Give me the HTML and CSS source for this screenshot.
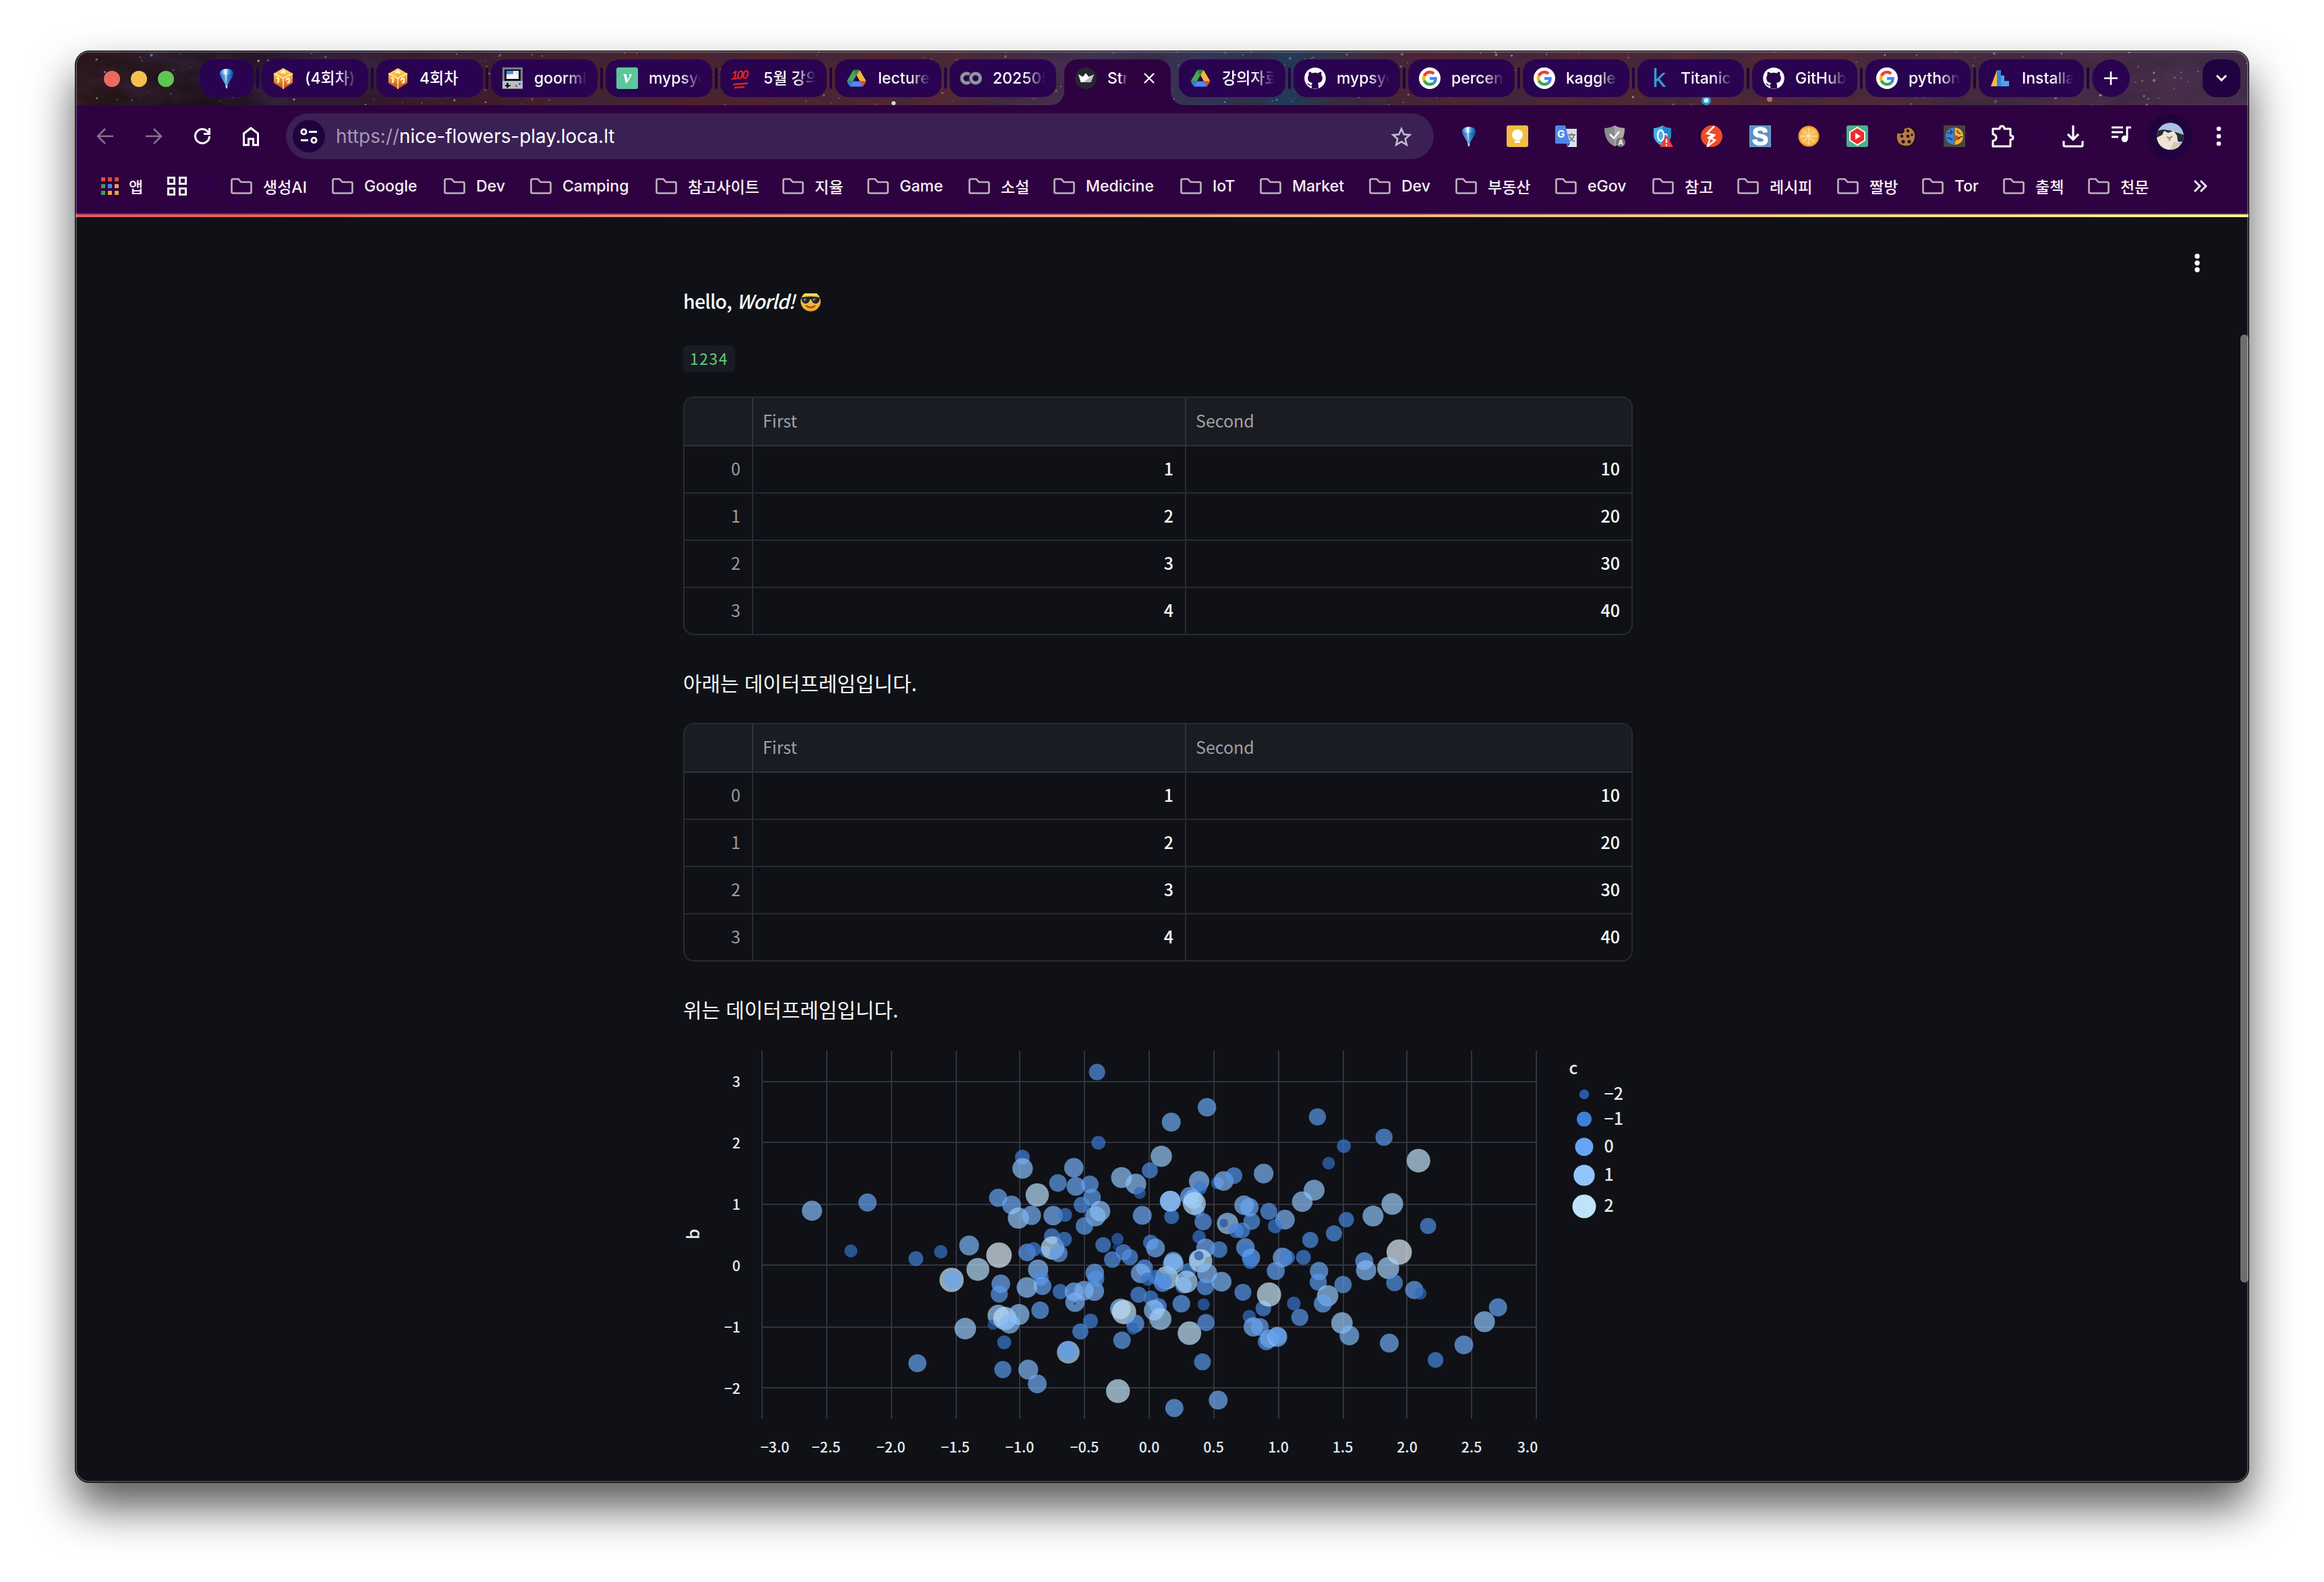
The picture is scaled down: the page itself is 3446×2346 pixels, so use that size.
FILE: index.html
```html
<!DOCTYPE html>
<html lang="ko">
<head>
<meta charset="utf-8">
<title>Streamlit</title>
<link rel="stylesheet" href="styles.css">
</head>
<body>
<svg class="defs" width="0" height="0" aria-hidden="true">
  <defs>
    <linearGradient id="gemFill" x1="0" x2="1"><stop offset="0" stop-color="#1c6fd0"/><stop offset=".45" stop-color="#d8f1ff"/><stop offset=".6" stop-color="#4aa8ee"/><stop offset="1" stop-color="#0b3f96"/></linearGradient>
    <linearGradient id="diceFill" x1="0" y1="0" x2="0" y2="1"><stop offset="0" stop-color="#ffe27a"/><stop offset=".45" stop-color="#f7a63a"/><stop offset="1" stop-color="#b8401c"/></linearGradient>
    <linearGradient id="faceFill" x1="0" y1="0" x2="0" y2="1"><stop offset="0" stop-color="#ffe34f"/><stop offset="1" stop-color="#ee9a2c"/></linearGradient>
    <symbol id="gem" viewBox="0 0 32 32"><path d="M6 7Q9 2 16 2t10 5q1 3-1 6L18 25l-1 6h-2l-1-6L7 13Q5 10 6 7z" fill="url(#gemFill)"/><path d="M6 9q10 4 20 0l-2 5-7 13h-2L8 14z" fill="#0c56b0" opacity=".45"/><path d="M12 4l4 20V3z" fill="#fff" opacity=".6"/></symbol>
    <symbol id="dice" viewBox="0 0 32 32"><path d="M16 1l14 8v14l-14 9-14-9V9z" fill="url(#diceFill)"/><path d="M2 9l14 7 14-7M16 16v16" fill="none" stroke="#fff0a0" stroke-width="1.6"/><path d="M6 16q4-1 3 3t-1 4M20 19q4-5 5-1t-3 5M13 8q5-4 5 1" fill="none" stroke="#fffbd5" stroke-width="2.4"/></symbol>
    <symbol id="console" viewBox="0 0 32 32"><path d="M1 0h30v32H1z" fill="#77808a"/><path d="M1 20h30v11H1z" fill="#b9bec4"/><path d="M4 3h24v17H4z" fill="#10141c"/><path d="M7 5h18v12H7z" fill="#dbe9fb"/><path d="M7 5h10v5H7z" fill="#4c8cf0"/><path d="M7 13h5v-3h5V7h4v4h4v6H7z" fill="#fff"/><path d="M7 23h3v3h3v2h-3v2H7v-2H5v-2h2z" fill="#111"/><path d="M20 26h3v3h-3z" fill="#e04a4a"/><path d="M25 23h3v3h-3z" fill="#3867d6"/></symbol>
    <symbol id="drive" viewBox="0 0 87.3 78"><path d="M6.6 66.85l3.85 6.65c.8 1.4 1.95 2.5 3.3 3.3l13.75-23.8H0c0 1.55.4 3.1 1.2 4.5z" fill="#3c78e8"/><path d="M43.65 25L29.9 1.2c-1.35.8-2.5 1.9-3.3 3.3L1.2 48.5A9 9 0 0 0 0 53h27.5z" fill="#47a852"/><path d="M73.55 76.8c1.35-.8 2.5-1.9 3.3-3.3l1.6-2.75L86.1 57.5c.8-1.4 1.2-2.95 1.2-4.5H59.8l5.85 11.5z" fill="#dc4a3c"/><path d="M43.65 25L57.4 1.2C56.05.4 54.5 0 52.9 0H34.4c-1.6 0-3.15.45-4.5 1.2z" fill="#2f8a40"/><path d="M59.8 53H27.5L13.75 76.8c1.35.8 2.9 1.2 4.5 1.2h50.8c1.6 0 3.15-.45 4.5-1.2z" fill="#4d8bf5"/><path d="M73.4 26.5l-12.7-22c-.8-1.4-1.95-2.5-3.3-3.3L43.65 25 59.8 53h27.45c0-1.55-.4-3.1-1.2-4.5z" fill="#f5b73a"/></symbol>
    <symbol id="github" viewBox="0 0 16 16"><circle cx="8" cy="8" r="7.9" fill="#fff"/><path d="M5.5 15.6v-2.1c-2.3.4-2.7-1.1-3.6-1.5 1.5-.4 1.8 1 2.7 1.1.4 0 .8-.1 1-.3 0-.6.2-1 .5-1.3-2.2-.3-3.5-1.2-3.5-3.6 0-1 .3-1.7.8-2.3-.2-.7-.2-1.5.1-2.3.9 0 1.7.5 2.2.9 1.5-.4 3.1-.4 4.6 0 .6-.4 1.3-.9 2.2-.9.3.8.3 1.6.1 2.3.5.6.8 1.3.8 2.3 0 2.4-1.3 3.3-3.5 3.6.4.4.6.9.6 1.7v2.4z" fill="#2a0350"/></symbol>
    <symbol id="google" viewBox="0 0 64 64"><circle cx="32" cy="32" r="32" fill="#fff"/><g transform="translate(9.5 9.5) scale(.94)"><path fill="#EA4335" d="M24 9.5c3.54 0 6.71 1.22 9.21 3.6l6.85-6.85C35.9 2.38 30.47 0 24 0 14.62 0 6.51 5.38 2.56 13.22l7.98 6.19C12.43 13.72 17.74 9.5 24 9.5z"/><path fill="#4285F4" d="M46.98 24.55c0-1.57-.15-3.09-.38-4.55H24v9.02h12.94c-.58 2.96-2.26 5.48-4.78 7.18l7.73 6c4.51-4.18 7.09-10.36 7.09-17.65z"/><path fill="#FBBC05" d="M10.53 28.59c-.48-1.45-.76-2.99-.76-4.59s.27-3.14.76-4.59l-7.98-6.19C.92 16.46 0 20.12 0 24s.92 7.54 2.56 10.78l7.97-6.19z"/><path fill="#34A853" d="M24 48c6.48 0 11.93-2.13 15.89-5.81l-7.73-6c-2.15 1.45-4.92 2.3-8.16 2.3-6.26 0-11.57-4.22-13.47-9.91l-7.98 6.19C6.51 42.62 14.62 48 24 48z"/></g></symbol>
    <symbol id="folder" viewBox="0 0 32 24"><path d="M3.5 1.5h8l4 4.500h13q2 0 2 2v12.500q0 2-2 2h-25q-2 0-2-2v-17q0-2 2-2z" fill="none" stroke="#bdb5bb" stroke-width="2.6"/></symbol>
  </defs>
</svg>

<div class="window">
  <div class="tabstrip">
    <svg class="nebula" viewBox="0 0 3222 80" preserveAspectRatio="none" aria-hidden="true">
      <defs>
        <linearGradient id="sky" x1="0" x2="1">
          <stop offset="0" stop-color="#2a1618"/><stop offset=".06" stop-color="#1c1018"/><stop offset=".1" stop-color="#2b1632"/><stop offset=".17" stop-color="#3a1a2a"/><stop offset=".25" stop-color="#4e2028"/><stop offset=".4" stop-color="#532833"/><stop offset=".46" stop-color="#443150"/><stop offset=".5" stop-color="#3a3458"/><stop offset=".56" stop-color="#223a58"/><stop offset=".61" stop-color="#4c2434"/><stop offset=".75" stop-color="#552832"/><stop offset=".9" stop-color="#482b42"/><stop offset="1" stop-color="#46304e"/>
        </linearGradient>
        <filter id="cloud" x="0" y="0" width="100%" height="100%"><feTurbulence type="fractalNoise" baseFrequency=".012 .03" numOctaves="5" seed="7"/><feColorMatrix values="0 0 0 0 .04  0 0 0 0 .02  0 0 0 0 .05  0 1.5 0 0 -.5"/></filter>
      </defs>
      <rect width="3222" height="80" fill="url(#sky)"/>
      <rect width="3222" height="80" filter="url(#cloud)"/>
      <g id="stars"></g>
      <circle cx="2418" cy="73" r="7" fill="#2f8fc8"/><circle cx="2418" cy="73" r="3.5" fill="#c8f4ff"/>
      <circle cx="2512" cy="71" r="4" fill="#c06a6a"/><circle cx="1213" cy="77" r="3" fill="#d8d4ea"/>
    </svg>
    <div class="lights"><i class="red"></i><i class="yellow"></i><i class="green"></i></div>
    <div class="tabs">
      <div class="tab pinned"><svg class="fav"><use href="#gem"/></svg></div>
      <div class="tab"><svg class="fav"><use href="#dice"/></svg><span>(4회차)</span></div>
      <div class="tab"><svg class="fav"><use href="#dice"/></svg><span class="short">4회차</span></div>
      <div class="tab"><svg class="fav"><use href="#console"/></svg><span>goormE</span></div>
      <div class="tab"><b class="fav velog">v</b><span>mypsyc</span></div>
      <div class="tab"><b class="fav hundred">100</b><span>5월 강의</span></div>
      <div class="tab"><svg class="fav"><use href="#drive" x="2" y="2" width="28" height="28"/></svg><span>lecture</span></div>
      <div class="tab"><svg class="fav" viewBox="0 0 32 32"><g fill="none" stroke="#8f969b" stroke-width="5"><path d="M13.5 10.5a7 7 0 1 0 0 11"/><circle cx="22.5" cy="16" r="7"/></g></svg><span>202505</span></div>
      <div class="tab active"><svg class="fav" viewBox="0 0 32 32"><circle cx="16" cy="16" r="16" fill="#262730"/><path d="M5 10l6.5 4L16 8.5 20.5 14 28 10.5 23.5 22h-15z" fill="#fff"/><path d="M28 10.5L23.5 22H12z" fill="#b9bbc0"/></svg><span>Str</span><svg class="close" viewBox="0 0 16 16"><path d="M1 1l14 14M15 1L1 15" stroke="#fff" stroke-width="2.4"/></svg></div>
      <div class="tab"><svg class="fav"><use href="#drive" x="2" y="2" width="28" height="28"/></svg><span>강의자료</span></div>
      <div class="tab"><svg class="fav"><use href="#github"/></svg><span>mypsyc</span></div>
      <div class="tab"><svg class="fav"><use href="#google"/></svg><span>percen</span></div>
      <div class="tab"><svg class="fav"><use href="#google"/></svg><span>kaggle</span></div>
      <div class="tab"><b class="fav kaggle">k</b><span>Titanic</span></div>
      <div class="tab narrow"><svg class="fav"><use href="#github"/></svg><span>GitHub</span></div>
      <div class="tab narrow"><svg class="fav"><use href="#google"/></svg><span>python</span></div>
      <div class="tab narrow"><svg class="fav" viewBox="0 0 32 32"><path d="M2 28L11 4v24z" fill="#f5b942"/><path d="M11 28V4h6v8h5v8h7v8z" fill="#4aa3f0"/><path d="M11 4h6v24h-6z" fill="#3486d8"/></svg><span>Installa</span></div>
      <div class="newtab"><svg width="22" height="22" viewBox="0 0 22 22"><path d="M11 1v20M1 11h20" stroke="#fff" stroke-width="2.6"/></svg></div>
    </div>
    <div class="tabsearch"><svg width="18" height="12" viewBox="0 0 18 12"><path d="M2 2l7 7 7-7" fill="none" stroke="#fff" stroke-width="3"/></svg></div>
  </div>

  <div class="toolbar">
    <div class="tool"><svg width="26" height="26" viewBox="0 0 26 26"><path d="M25 13H3M13 2L2 13l11 11" fill="none" stroke="#88708f" stroke-width="2.6"/></svg></div>
    <div class="tool"><svg width="26" height="26" viewBox="0 0 26 26"><path d="M1 13h22M13 2l11 11-11 11" fill="none" stroke="#88708f" stroke-width="2.6"/></svg></div>
    <div class="tool"><svg width="28" height="28" viewBox="0 0 28 28"><path d="M23 8.5A10.5 10.5 0 1 0 24.5 14M24.5 2v8.500H16" fill="none" stroke="#fff" stroke-width="3"/></svg></div>
    <div class="tool"><svg width="26" height="30" viewBox="0 0 26 30"><path d="M2.5 28V11L13 3l10.500 8v17H16.500v-9h-7v9z" fill="none" stroke="#fff" stroke-width="3"/></svg></div>
    <div class="omnibox">
      <div class="siteinfo"><svg width="26" height="24" viewBox="0 0 26 24"><g fill="none" stroke="#fff" stroke-width="2.8"><circle cx="5.5" cy="5.5" r="3.6"/><path d="M13 5.5h12M1 18h11"/><circle cx="20.5" cy="18" r="3.6"/></g></svg></div>
      <p class="url"><span>https://</span>nice-flowers-play.loca.lt</p>
      <svg class="star" width="32" height="30" viewBox="0 0 32 30"><path d="M16 4l3.600 8.300 8.900.8-6.800 5.900 2.100 8.800L16 23.100l-7.800 4.700 2.100-8.800-6.800-5.900 8.900-.8z" fill="none" stroke="#c3bcc9" stroke-width="2.6"/></svg>
    </div>
    <div class="extensions">
      <div class="tool"><svg class="ext"><use href="#gem"/></svg></div>
      <div class="tool"><svg class="ext" viewBox="0 0 32 32"><rect width="32" height="32" rx="3" fill="#f3bd43"/><circle cx="16" cy="14" r="8" fill="#fff"/><path d="M12 19h8v2h-8zM12 22.500h8V26h-8z" fill="#fff"/></svg></div>
      <div class="tool"><svg class="ext" viewBox="0 0 32 32"><path d="M12 5h20v27H18z" fill="#dcdfe3"/><path d="M0 2q0-2 2-2h13l7 27-4 5-1-5H2q-2 0-2-2z" fill="#4f86ec"/><path d="M18 27h4l-4 5z" fill="#2750a8"/><text x="3" y="18" font-size="15" font-weight="700" fill="#fff">G</text><path d="M19 14h11M24.500 11v3M28 14q-2 7-8 10M21 16q3 6 8 8" stroke="#6d7f8e" stroke-width="1.8" fill="none"/></svg></div>
      <div class="tool"><svg class="ext" viewBox="0 0 32 32"><path d="M16 0q7 4 15 4 0 20-15 27Q1 24 1 4q8 0 15-4z" fill="#8c8c8c"/><path d="M16 0q7 4 15 4 0 20-15 27z" fill="#a8a8a8"/><path d="M9 13l6 6 8-10" fill="none" stroke="#fff" stroke-width="2.5"/><circle cx="25" cy="25" r="7" fill="#777"/><text x="21.2" y="29" font-size="10.5" font-weight="700" fill="#fff">A</text></svg></div>
      <div class="tool"><svg class="ext" viewBox="0 0 32 32"><path d="M15 0q6 4 13 4v12q-2 10-13 15Q4 26 2 16V4q7 0 13-4z" fill="#45b0ec"/><path d="M15 0q6 4 13 4v12q-2 10-13 15z" fill="#2a86c8"/><ellipse cx="12.5" cy="15" rx="4.5" ry="8" fill="none" stroke="#fff" stroke-width="2.5"/><path d="M17 14q5-4 5 4" fill="none" stroke="#fff" stroke-width="2"/><path d="M21 14l10 18H11z" fill="#ec3d3a"/><path d="M21 20v6M21 28v2.500" stroke="#fff" stroke-width="2.2"/></svg></div>
      <div class="tool"><svg class="ext" viewBox="0 0 32 32"><circle cx="16" cy="16" r="16" fill="#ee4a28"/><path d="M20 1L9 12l10 2-9 5M15 15l-5 16 11-9-6-3 6-5" fill="none" stroke="#fff" stroke-width="2.6"/></svg></div>
      <div class="tool"><b class="ext letter-s">S</b></div>
      <div class="tool"><svg class="ext" viewBox="0 0 32 32"><circle cx="16" cy="16" r="15.5" fill="#f39a33"/><circle cx="16" cy="16" r="13" fill="#fbb950"/><path d="M16 3v26M3 16h26M7 7l18 18M25 7L7 25" stroke="#fde2a0" stroke-width="1.4"/></svg></div>
      <div class="tool"><svg class="ext" viewBox="0 0 32 32"><rect width="32" height="32" rx="3" fill="#4fae8c"/><path d="M16 3l11 7v12l-11 7-11-7V10z" fill="#ea2f2c" stroke="#fff" stroke-width="2"/><path d="M13 11l8 5-8 5z" fill="#fff"/></svg></div>
      <div class="tool"><svg class="ext" viewBox="0 0 32 32"><path d="M13 2q2 4 7 0 11 4 10 15-2 14-14 14Q2 30 2 17q0-5 2-7 5 4 9-1z" fill="#b9794c" stroke="#1c130e" stroke-width="1.6"/><g fill="#1c130e"><circle cx="19" cy="8" r="2.2"/><circle cx="10" cy="16" r="2.3"/><circle cx="19" cy="16" r="2.4"/><circle cx="25" cy="14" r="1.8"/><circle cx="12" cy="24" r="2.6"/><circle cx="21" cy="24" r="2.6"/></g></svg></div>
      <div class="tool"><svg class="ext" viewBox="0 0 32 32"><rect width="32" height="32" fill="#4a443e"/><path d="M15.500 3Q3 5 3 16t12.500 13z" fill="#3d82d8"/><path d="M16.500 3Q29 5 29 16T16.500 29z" fill="#f0b62c"/><path d="M17 14l8 4-8 6z" fill="#dc3d2c"/><path d="M6 12q4-3 6 1M5 19q5-1 8 3M10 6q1 4 4 4M20 7q0 4 5 5M28 17q-4-1-6 4" fill="none" stroke="#1f3260" stroke-width="1.5"/></svg></div>
      <div class="tool"><svg width="36" height="34" viewBox="0 0 36 34"><path d="M3 6h10q0-4 3.500-4T20 6h9v10q4 0 4 3t-4 3v10H3v-8q5-1 5-5t-5-5z" fill="none" stroke="#fff" stroke-width="3" stroke-linejoin="round"/></svg></div>
    </div>
    <i class="toolsep"></i>
    <div class="tool"><svg width="32" height="34" viewBox="0 0 32 34"><path d="M16 1v21M8 14l8 8 8-8M2 24v6q0 2 2 2h24q2 0 2-2v-6" fill="none" stroke="#fff" stroke-width="3.2"/></svg></div>
    <div class="tool"><svg class="music" width="32" height="26" viewBox="0 0 32 26"><path d="M1 3h17M1 10h17M1 17h10M30 3h-6v16" fill="none" stroke="#fff" stroke-width="3"/><ellipse cx="20.5" cy="20" rx="4.8" ry="5" fill="#fff"/></svg></div>
    <div class="tool"><div class="profile"><svg width="40" height="40" viewBox="0 0 40 40"><defs><clipPath id="round"><circle cx="20" cy="20" r="20"/></clipPath></defs><g clip-path="url(#round)"><rect width="40" height="40" fill="#a9c1e2"/><path d="M0 12l10-2 12 2 18 6v10H0z" fill="#2b2a30"/><path d="M0 22l8-4 3-6 6 3 8-3 5 7 1 7 5 14H0z" fill="#ece4d8"/><path d="M15 21l4 2 4-3M19 23v4" stroke="#b07e78" stroke-width="2.2" fill="none"/><path d="M25 28q9 0 11 12H20z" fill="#d4c7b4"/></g></svg></div></div>
    <div class="tool"><svg width="8" height="30" viewBox="0 0 8 30" fill="#fff"><circle cx="4" cy="4" r="3.3"/><circle cx="4" cy="15" r="3.3"/><circle cx="4" cy="26" r="3.3"/></svg></div>
  </div>

  <div class="bookmarks">
    <div class="apps"><svg width="28" height="28" viewBox="0 0 28 28"><path d="M1 1h6v6H1zM11 1h6v6h-6zM21 1h6v6h-6z" fill="#e2493b"/><path d="M1 11h6v6H1zM1 21h6v6H1z" fill="#3f9e57"/><path d="M11 11h6v6h-6z" fill="#4a86ee"/><path d="M21 11h6v6h-6zM11 21h6v6h-6zM21 21h6v6h-6z" fill="#e9a437"/></svg><span>앱</span></div>
    <svg class="grid" width="29" height="28" viewBox="0 0 29 28"><path d="M1.500 1.500h9v9h-9zM18.500 1.500h9v9h-9zM1.500 17.500h9v9h-9zM18.500 17.500h9v9h-9z" fill="none" stroke="#fff" stroke-width="3"/></svg>
    <i class="marksep"></i>
    <div class="folders">
      <div><svg><use href="#folder"/></svg>생성AI</div>
      <div><svg><use href="#folder"/></svg>Google</div>
      <div><svg><use href="#folder"/></svg>Dev</div>
      <div><svg><use href="#folder"/></svg>Camping</div>
      <div><svg><use href="#folder"/></svg>참고사이트</div>
      <div><svg><use href="#folder"/></svg>지율</div>
      <div><svg><use href="#folder"/></svg>Game</div>
      <div><svg><use href="#folder"/></svg>소설</div>
      <div><svg><use href="#folder"/></svg>Medicine</div>
      <div><svg><use href="#folder"/></svg>IoT</div>
      <div><svg><use href="#folder"/></svg>Market</div>
      <div><svg><use href="#folder"/></svg>Dev</div>
      <div><svg><use href="#folder"/></svg>부동산</div>
      <div><svg><use href="#folder"/></svg>eGov</div>
      <div><svg><use href="#folder"/></svg>참고</div>
      <div><svg><use href="#folder"/></svg>레시피</div>
      <div><svg><use href="#folder"/></svg>짤방</div>
      <div><svg><use href="#folder"/></svg>Tor</div>
      <div><svg><use href="#folder"/></svg>출첵</div>
      <div><svg><use href="#folder"/></svg>천문</div>
    </div>
    <svg class="more" width="21" height="18" viewBox="0 0 21 18"><path d="M2 1l8 8-8 8M11 1l8 8-8 8" fill="none" stroke="#fff" stroke-width="2.8"/></svg>
  </div>

  <div class="app">
    <div class="rainbow"></div>
    <svg class="appmenu" width="8" height="28" viewBox="0 0 8 28" fill="#fafafa"><circle cx="4" cy="4" r="3.7"/><circle cx="4" cy="14" r="3.7"/><circle cx="4" cy="24" r="3.7"/></svg>
    <main>
      <p class="hello">hello, <em>World!</em> <svg class="cool" viewBox="0 0 30 30"><circle cx="15" cy="15" r="14.8" fill="url(#faceFill)"/><path d="M1 9q14-3 28 0l-1 5q-2 5-7 4-4-1-5-6h-2q-1 5-5 6-5 1-7-4z" fill="#23262c"/><path d="M4 11l5 0-3 4zM18 11h5l-4 4z" fill="#7d838c"/><path d="M8 21q7 6 14 0" fill="none" stroke="#7a4a12" stroke-width="1.8"/></svg></p>
      <code>1234</code>
      <table class="frame first">
        <thead><tr><th></th><th>First</th><th>Second</th></tr></thead>
        <tbody>
          <tr><td>0</td><td>1</td><td>10</td></tr>
          <tr><td>1</td><td>2</td><td>20</td></tr>
          <tr><td>2</td><td>3</td><td>30</td></tr>
          <tr><td>3</td><td>4</td><td>40</td></tr>
        </tbody>
      </table>
      <p class="note">아래는 데이터프레임입니다.</p>
      <table class="frame">
        <thead><tr><th></th><th>First</th><th>Second</th></tr></thead>
        <tbody>
          <tr><td>0</td><td>1</td><td>10</td></tr>
          <tr><td>1</td><td>2</td><td>20</td></tr>
          <tr><td>2</td><td>3</td><td>30</td></tr>
          <tr><td>3</td><td>4</td><td>40</td></tr>
        </tbody>
      </table>
      <p class="note">위는 데이터프레임입니다.</p>
      <svg class="chart" viewBox="1013 1550 1407 648" width="1407" height="648">
        <path class="gridlines" d="M1130 1558V2104M1226 1558V2104M1322 1558V2104M1418 1558V2104M1512 1558V2104M1608 1558V2104M1704 1558V2104M1800 1558V2104M1896 1558V2104M1992 1558V2104M2086 1558V2104M2182 1558V2104M2278 1558V2104M1130 1604H2278M1130 1694H2278M1130 1786H2278M1130 1876H2278M1130 1968H2278M1130 2058H2278"/>
        <g class="xlabels">
          <text x="1149" y="2154">−3.0</text><text x="1225" y="2154">−2.5</text><text x="1321" y="2154">−2.0</text><text x="1416.5" y="2154">−1.5</text><text x="1512" y="2154">−1.0</text><text x="1608" y="2154">−0.5</text><text x="1704" y="2154">0.0</text><text x="1799.5" y="2154">0.5</text><text x="1895.5" y="2154">1.0</text><text x="1991" y="2154">1.5</text><text x="2086.5" y="2154">2.0</text><text x="2182" y="2154">2.5</text><text x="2265" y="2154">3.0</text>
        </g>
        <g class="ylabels">
          <text x="1098" y="1612">3</text><text x="1098" y="1703">2</text><text x="1098" y="1794">1</text><text x="1098" y="1885">0</text><text x="1098" y="1976">−1</text><text x="1098" y="2067">−2</text>
        </g>
        <text class="title" transform="translate(1036.5 1838) rotate(-90)">b</text>
        <g id="points"></g>
        <g class="legend">
          <text x="2326.5" y="1593">c</text>
          <circle cx="2349" cy="1622.9" r="7.3" fill="#2559a9"/><text x="2378.5" y="1630.5">−2</text>
          <circle cx="2349" cy="1659.6" r="11" fill="#4080d9"/><text x="2378.5" y="1668">−1</text>
          <circle cx="2349" cy="1700.8" r="13.5" fill="#67a4f3"/><text x="2378.5" y="1709">0</text>
          <circle cx="2349" cy="1742.9" r="15.7" fill="#92c5fa"/><text x="2378.5" y="1751">1</text>
          <circle cx="2349" cy="1789" r="17.5" fill="#bfe3fb"/><text x="2378.5" y="1797">2</text>
        </g>
      </svg>
    </main>
    <i class="scrollbar"></i>
  </div>
</div>
<script src="page.js"></script>
</body>
</html>
```
FILE: styles.css
```css
* { box-sizing: border-box; }
body { margin: 0; width: 3446px; height: 2346px; padding: 75px 111px 0; background: #fff; overflow: hidden; font-family: Inter, "Noto Sans CJK KR", sans-serif; color: #fff; }
p { margin: 0; }
i { display: block; }
.defs { position: absolute; }

.window { position: relative; width: 3224px; height: 2124px; border: 1px solid #000; border-radius: 21px; overflow: hidden; background: #0f1116; display: flex; flex-direction: column; box-shadow: 0 36px 66px rgba(0,0,0,.66); }
.window::after { content: ""; position: absolute; inset: 0; border: 2px solid rgba(255,255,255,.23); border-radius: 20px; pointer-events: none; }

/* tab strip */
.tabstrip { position: relative; flex: none; height: 80px; display: flex; padding-top: 12px; }
.nebula { position: absolute; inset: 0; width: 100%; height: 100%; }
.lights { position: relative; width: 184px; padding: 17px 0 0 42px; display: flex; gap: 16px; }
.lights i { width: 24px; height: 24px; border-radius: 50%; }
.red { background: #ed6a5e; }
.yellow { background: #f4bf4f; }
.green { background: #61c554; }
.tabs { position: relative; display: flex; gap: 12px; }
.tab { position: relative; width: 158px; height: 56px; border-radius: 20px; background: #2a0350; display: flex; align-items: center; padding: 0 16px; gap: 16px; font-size: 23px; font-weight: 500; }
.tab.pinned { width: 80px; padding: 0 24px; }
.tab.narrow { width: 156px; }
.tab span { flex: 1; min-width: 0; overflow: hidden; white-space: nowrap; line-height: 40px; -webkit-mask-image: linear-gradient(90deg, #000 60%, transparent); mask-image: linear-gradient(90deg, #000 60%, transparent); }
.tab span.short { -webkit-mask-image: none; mask-image: none; }
.tab::after { content: ""; position: absolute; right: -8px; top: 12px; width: 4px; height: 32px; border-radius: 2px; background: #1f0344; }
.fav { flex: none; width: 32px; height: 32px; }
.velog { background: #5cc79c; border-radius: 3px; text-align: center; font: italic 700 27px/28px "Liberation Serif", serif; }
.hundred { color: #d8281f; font: italic 700 18px/22px "Liberation Sans", sans-serif; letter-spacing: -2px; transform: skewY(-4deg); background: linear-gradient(#d8281f, #d8281f) 3px 23px / 22px 2.5px no-repeat, linear-gradient(#d8281f, #d8281f) 5px 28px / 15px 2.5px no-repeat; }
.kaggle { color: #2fa0cf; font: 400 38px/30px Inter, sans-serif; padding-left: 6px; }
.tab.active { height: 68px; padding-bottom: 12px; border-radius: 20px 20px 0 0; background: #2e0240; gap: 16px; }
.tab.active span { flex: none; width: 30px; }
.tab.active::before, .tab.active::after { content: ""; position: absolute; top: auto; bottom: 0; width: 20px; height: 20px; border-radius: 0; background: radial-gradient(circle at 0 0, transparent 19.5px, #2e0240 20px); }
.tab.active::before { left: -20px; }
.tab.active::after { right: -20px; background: radial-gradient(circle at 100% 0, transparent 19.5px, #2e0240 20px); }
.tab:has(+ .active)::after { display: none; }
.close { flex: none; width: 16px; height: 16px; margin: 0 8px 0 auto; }
.newtab { width: 56px; height: 56px; border-radius: 50%; background: #2a0350; display: grid; place-items: center; }
.tabsearch { position: relative; width: 56px; height: 56px; margin: 0 12px 0 auto; border-radius: 20px; background: #200240; display: grid; place-items: center; }

/* toolbar */
.toolbar { flex: none; height: 92px; padding-left: 8px; background: #2e0240; display: flex; align-items: center; }
.tool { flex: none; width: 72px; height: 72px; display: grid; place-items: center; }
.omnibox { width: 1702px; height: 68px; margin: 0 16px; border-radius: 34px; background: #3a2055; display: flex; align-items: center; padding: 0 32px 0 10px; }
.siteinfo { width: 48px; height: 48px; border-radius: 50%; background: #20023e; display: grid; place-items: center; }
.url { margin-left: 16px; font-size: 27.9px; line-height: 68px; }
.url span { color: #a698b2; }
.star { margin-left: auto; }
.extensions { display: flex; }
.ext { display: block; width: 32px; height: 32px; }
.letter-s { background: #5b90c8; border: 1px solid #7ba6d2; text-align: center; font: 700 36px/31px "Liberation Sans", sans-serif; -webkit-text-stroke: 1.5px #fff; overflow: hidden; }
.toolsep { width: 4px; height: 32px; margin: 0 11px 0 17px; background: #290450; }
.music { margin-top: -6px; }
.profile { width: 68px; height: 68px; border-radius: 50%; background: #20023e; display: grid; place-items: center; }

/* bookmarks */
.bookmarks { flex: none; height: 68px; background: #2e0240; display: flex; align-items: center; padding: 0 0 12px 37px; font-size: 23px; font-weight: 450; white-space: nowrap; color: #fbeef8; }
.apps { width: 99px; display: flex; align-items: center; gap: 14px; }
.marksep { width: 4px; height: 32px; margin: 0 32px 0 29px; background: #290450; }
.folders { display: grid; grid-template-columns: 150px 166px 128px 186px 188px 126px 150px 126px 188px 118px 162px 128px 148px 144px 126px 148px 126px 120px 126px 90px; }
.folders div { display: flex; align-items: center; gap: 16px; }
.folders svg { width: 32px; height: 24px; flex: none; }
.more { margin-left: 66px; }

/* page */
.app { position: relative; flex: 1; border-top: 2px solid #503066; background: #0f1116; font-family: "Noto Sans CJK KR", sans-serif; color: #fafafa; }
.rainbow { height: 4px; background: linear-gradient(90deg, #f0544f, #f9a56e 50%, #fffd80); }
.appmenu { position: absolute; right: 72px; top: 58px; }
.scrollbar { position: absolute; right: 0; top: 178px; width: 12px; height: 1406px; border-radius: 6px; background: #6e6e72; }
main { width: 1408px; margin-left: 901px; padding-top: 113px; display: flex; flex-direction: column; align-items: flex-start; }
.hello { height: 34px; overflow: hidden; font-size: 28.4px; font-weight: 500; letter-spacing: -.75px; line-height: 22px; white-space: nowrap; }
.cool { display: inline-block; width: 30px; height: 30px; vertical-align: -4px; margin: -8px 0 0 1px; }
code { display: block; margin-top: 43px; width: 77px; height: 40px; border-radius: 8px; background: #1a1c24; color: #5ed17c; padding-left: 10px; font: 400 22.5px/38px "Noto Sans CJK KR", sans-serif; letter-spacing: 1.8px; }
.frame { width: 1408px; height: 354px; border: 2px solid #292b32; border-radius: 16px; border-spacing: 0; table-layout: fixed; overflow: hidden; font-size: 25px; }
.frame.first { margin-top: 36px; }
.frame th, .frame td { padding: 0 17px 5px; text-align: right; line-height: 60px; border-right: 2px solid #292b32; border-bottom: 2px solid #292b32; height: 70px; font-weight: 500; }
.frame th { height: 72px; padding-left: 14px; padding-bottom: 4px; background: #191c23; color: #a0a1a6; font-weight: 400; text-align: left; border-color: #31333b; }
.frame th:first-child { width: 102px; }
.frame th:nth-child(2) { width: 642px; }
.frame td:first-child { color: #9b9ca0; font-weight: 400; }
.frame th:last-child, .frame td:last-child { border-right: 0; }
.frame tr:last-child td { border-bottom: 0; height: 68px; }
.frame thead tr:last-child th { height: 72px; }
.note { height: 48px; margin: 47px 0 35px; font-size: 29.9px; line-height: 46px; white-space: nowrap; }
.note:last-of-type { margin-bottom: 29px; }
.chart { display: block; width: 1407px; font-family: "Noto Sans CJK KR", sans-serif; fill: #e6eaf1; font-weight: 500; }
.gridlines { stroke: #31333f; stroke-width: 2; fill: none; }
.xlabels { font-size: 21.3px; text-anchor: middle; }
.ylabels { font-size: 21.3px; text-anchor: end; }
.legend, .title { font-size: 25px; }
```
FILE: page.js
```js
const NS = "http://www.w3.org/2000/svg";

// Scatter samples: centre x, centre y, radius (the radius encodes column c)
const samples = [
[1204,1795.5,15],[1286.3,1783.3,13.5],[1261.7,1855,9.7],[1358,1866.5,11],[1395,1856.3,10],[1437,1847,14.7],[1450,1882.4,17],[1411,1898,18],[1412.7,1897.6,13.5],[1431.3,1970.2,16],[1360.3,2021.6,13.4],
[1628.7,1694.7,10.4],[1516,1716,11],[1516.3,1732.7,15.2],[1538,1772,17.3],[1480,1776.3,13.5],[1500,1787,13.9],[1510,1806.3,15.7],[1529.3,1802.3,14.3],[1568.7,1754.3,13],[1592.3,1731.7,14.4],[1595.3,1759.3,13.9],[1616,1756.3,13],[1619.3,1775.7,13],[1604,1786.7,12],[1631,1796,15.3],[1624.3,1803.7,15],[1608,1818,13],[1561.7,1802.7,14.4],[1579.3,1801.7,10.4],[1663,1746.3,15.5],[1684.3,1755.7,15.3],[1690,1769,9],[1693.7,1802.3,14],
[1481.3,1861.3,18.9],[1559.7,1833.3,11.7],[1549.7,1855.7,8.7],[1560.7,1850.7,17.3],[1578.3,1837.7,11],[1570,1858.7,13],[1523,1857.3,13],[1533,1852.7,10.7],[1484,1903.7,13.8],[1481.7,1919,12.7],[1539.3,1882.7,15],[1543.3,1894.7,11.7],[1545.7,1907,13.4],[1522.7,1909.3,15.3],[1542.3,1943,13],[1572.3,1915.3,11.4],[1592.7,1915.7,14],[1607.3,1914,14.4],[1594,1931,14.4],[1593.7,1933.3,1.7],[1622.7,1914.7,14.4],[1623.3,1887.7,13.7],[1625,1896.3,12.4],
[1635.7,1846,11.5],[1657,1837.3,9],[1654.7,1849.3,4.7],[1649.3,1867.7,12.3],[1666,1857,12],[1675.3,1864.3,12.1],[1617,1959,11],[1602,1974.5,12],[1661.3,1941,15.3],[1666.7,1945.7,18],[1683.3,1962.7,13.4],[1680,1970.3,9],[1663.7,1987.5,13],[1480.3,1950.7,16],[1472.3,1964.3,8],[1490,1955.3,17.3],[1497,1962.7,15],[1511,1949.3,15.5],
[1626.7,1589.8,12.2],[1789.7,1642,13.7],[1736.7,1664,14],[1489,1990.6,10.4],[1487,2031,12.7],[1524.7,2031,14.7],[1538,2052.2,14],[1584,2005.3,16.8],[1582.3,2002.5,13],[1657.7,2062.9,17.7],[1783,2019.6,12.5],[1741.3,2088,13.5],[1806.3,2076.3,14],
[1722,1714.7,15.8],[1705,1735.7,11.9],[1778,1751.7,15.1],[1779.7,1761.3,10.4],[1737.3,1804.3,11],[1735.3,1781.3,15.5],[1735.3,1781.3,15.2],[1776,1795,10],[1764,1774.3,14],[1769,1778.3,14.3],[1771,1784.7,17],[1784,1811.7,12.8],[1778,1834.3,10],[1805,1754.3,9.4],[1814.3,1751.3,14.6],[1829.7,1743.3,12.4],[1873.7,1740.3,14.6],[1820.3,1814.3,15.9],[1814.7,1813.7,6.4],[1833,1825,11],[1841.7,1824.7,11.8],[1856,1811.3,12.4],[1844.7,1787.3,14.5],[1852.7,1790.3,13.6],[1881.3,1796.3,12.5],[1905.3,1808.7,14.6],[1890.7,1818.3,10.6],
[1706.3,1842.3,11.4],[1713.3,1850.7,14],[1787.7,1850.7,14],[1807.7,1853,12.3],[1846.7,1850,13.7],[1846.3,1855.3,10],[1855,1865,13.5],[1854,1871,10.8],[1901.7,1864.7,14.4],[1909,1864.7,11],[1891.7,1884.7,13.4],[1739.7,1870,13.7],[1762.3,1884,11],[1730,1894.7,17.3],[1739.7,1874.3,15.3],[1775,1866,12],[1780.3,1869.7,17.3],[1777.7,1862,7.1],[1790,1888.3,14.8],[1697,1880,12.5],[1691.3,1888.3,14.5],[1701.7,1896.7,10],[1713.7,1894,11],[1724,1902.7,13],[1726,1900,11.7],[1754.7,1906,12.3],[1759.3,1900.7,16.5],[1787.3,1908,12.7],[1811.3,1900.7,14.7],[1843,1916.3,12.6],[1873.3,1940.3,11.6],[1881.7,1919.7,18],[1784.7,1934.3,9],[1751.7,1933.3,13.1],[1688.3,1920,12],[1706.3,1924.7,11],[1717.7,1937.3,12.4],[1711.3,1943,15.2],[1720.7,1956,16.3],[1763.7,1977,17.5],[1788.3,1961.3,12.8],[1852.3,1952.3,9.8],[1858.3,1967.7,14.3],[1868,1967.7,13.2],[1877.6,1989.8,12.5],[1882,1985.3,13.8],[1893.9,1982.5,14.8],[1894.7,1980.8,13],
[1953.5,1656.3,12.7],[2052.2,1686.5,12.7],[1992.7,1699.6,10.4],[1970.2,1724.9,9.4],[2103.3,1721.2,17.5],[1948.6,1764.9,15.5],[1931,1782,15.3],[2064.5,1785.3,16.1],[2035.9,1803.3,15.5],[1996.3,1808.6,11.4],[1978,1829,12],[2117.6,1818,12],[1942.9,1838.8,12],[1932.7,1864.5,11],[2022.9,1870.2,13.3],[2025.7,1883.7,15],[2074.7,1856.7,18.8],[2058.4,1880.4,16.3],[2067.8,1902.4,12.4],[1955.9,1884.9,13.6],[1954.7,1901.2,12.7],[1991.4,1904.9,12.9],[1968.6,1921.6,15.8],[1961.6,1933,13.5],[2097,1913,13.5],[2106,1918,9.3],[1918.4,1933,10.2],[1927.3,1953.5,12.7],[1989.8,1962,15.9],[2000.8,1980.4,14.6],[2060,1991.8,14],[2221.2,1938.8,13.5],[2201.2,1960,15.5],[2170.6,1994.3,13.9],[2128.6,2016.7,11.6]
];

// Sequential blue ramp, c from -3 to 3
const ramp = [[15,62,140],[37,89,169],[64,128,217],[103,164,243],[146,197,250],[191,227,251],[232,240,248]];
function color(c) {
  const t = Math.max(0, Math.min(5.999, c + 3)), k = Math.floor(t), f = t - k;
  return "rgb(" + ramp[k].map((v, j) => Math.round(v + (ramp[k + 1][j] - v) * f)).join() + ")";
}
function dot(parent, x, y, r, fill, opacity) {
  const el = document.createElementNS(NS, "circle");
  const attrs = { cx: x, cy: y, r, fill, "fill-opacity": opacity };
  for (const k in attrs) el.setAttribute(k, attrs[k]);
  parent.appendChild(el);
}
const points = document.getElementById("points");
for (const [x, y, r] of samples) dot(points, x, y, r, color((r * r - 182) / 62), 0.7);

// Star field behind the tabs
let seed = 11;
const rnd = () => (seed = (seed * 16807) % 2147483647) / 2147483647;
const stars = document.getElementById("stars");
const tints = ["#c9c4d6", "#8fb4c4", "#b06fb8", "#d9a78f"];
for (let k = 0; k < 420; k++) dot(stars, rnd() * 3222, rnd() * 80, 0.7 + rnd() * rnd() * 1.8, tints[Math.floor(rnd() * 4)], 0.3 + rnd() * 0.5);
```
